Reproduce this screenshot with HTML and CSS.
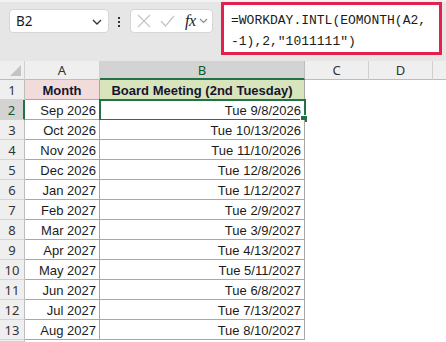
FILE: index.html
```html
<!DOCTYPE html>
<html>
<head>
<meta charset="utf-8">
<link rel="stylesheet" href="styles.css">
</head>
<body>
<div class="app">
  <div class="toolbar">
    <div class="namebox">
      <span class="ref">B2</span>
      <svg class="chev" width="10" height="6" viewBox="0 0 10 6"><path d="M1 1 L5 5 L9 1" fill="none" stroke="#333" stroke-width="1.3"/></svg>
    </div>
    <div class="dots"><i></i><i></i><i></i></div>
    <div class="fxbox">
      <svg class="ic" width="14" height="14" viewBox="0 0 14 14"><path d="M1 1 L13 13 M13 1 L1 13" stroke="#c4c4c4" stroke-width="1.2" fill="none"/></svg>
      <svg class="ic" width="15" height="12" viewBox="0 0 15 12"><path d="M1 6 L5.5 11 L14 1" stroke="#c4c4c4" stroke-width="1.2" fill="none"/></svg>
      <span class="fx">fx</span>
      <svg class="chev2" width="9" height="6" viewBox="0 0 9 6"><path d="M1 1 L4.5 4.5 L8 1" fill="none" stroke="#888" stroke-width="1.1"/></svg>
    </div>
    <div class="formula">=WORKDAY.INTL(EOMONTH(A2,<br>-1),2,"1011111")</div>
  </div>
  <div class="sheet">
    <div class="ch corner"><span class="tri"></span></div>
    <div class="ch">A</div>
    <div class="ch sel">B</div>
    <div class="ch">C</div>
    <div class="ch">D</div>
    <div class="ch last"></div>

    <div class="rh">1</div>
    <div class="c t hdr pink">Month</div>
    <div class="c t hdr green">Board Meeting (2nd Tuesday)</div>
    <div class="c e"></div><div class="c e"></div><div class="c e"></div>

    <div class="rh sel">2</div>
    <div class="c t r">Sep 2026</div>
    <div class="c t r active">Tue 9/8/2026<span class="handle"></span></div>
    <div class="c e"></div><div class="c e"></div><div class="c e"></div>

    <div class="rh">3</div>
    <div class="c t r">Oct 2026</div>
    <div class="c t r">Tue 10/13/2026</div>
    <div class="c e"></div><div class="c e"></div><div class="c e"></div>

    <div class="rh">4</div>
    <div class="c t r">Nov 2026</div>
    <div class="c t r">Tue 11/10/2026</div>
    <div class="c e"></div><div class="c e"></div><div class="c e"></div>

    <div class="rh">5</div>
    <div class="c t r">Dec 2026</div>
    <div class="c t r">Tue 12/8/2026</div>
    <div class="c e"></div><div class="c e"></div><div class="c e"></div>

    <div class="rh">6</div>
    <div class="c t r">Jan 2027</div>
    <div class="c t r">Tue 1/12/2027</div>
    <div class="c e"></div><div class="c e"></div><div class="c e"></div>

    <div class="rh">7</div>
    <div class="c t r">Feb 2027</div>
    <div class="c t r">Tue 2/9/2027</div>
    <div class="c e"></div><div class="c e"></div><div class="c e"></div>

    <div class="rh">8</div>
    <div class="c t r">Mar 2027</div>
    <div class="c t r">Tue 3/9/2027</div>
    <div class="c e"></div><div class="c e"></div><div class="c e"></div>

    <div class="rh">9</div>
    <div class="c t r">Apr 2027</div>
    <div class="c t r">Tue 4/13/2027</div>
    <div class="c e"></div><div class="c e"></div><div class="c e"></div>

    <div class="rh">10</div>
    <div class="c t r">May 2027</div>
    <div class="c t r">Tue 5/11/2027</div>
    <div class="c e"></div><div class="c e"></div><div class="c e"></div>

    <div class="rh">11</div>
    <div class="c t r">Jun 2027</div>
    <div class="c t r">Tue 6/8/2027</div>
    <div class="c e"></div><div class="c e"></div><div class="c e"></div>

    <div class="rh">12</div>
    <div class="c t r">Jul 2027</div>
    <div class="c t r">Tue 7/13/2027</div>
    <div class="c e"></div><div class="c e"></div><div class="c e"></div>

    <div class="rh">13</div>
    <div class="c t r">Aug 2027</div>
    <div class="c t r">Tue 8/10/2027</div>
    <div class="c e"></div><div class="c e"></div><div class="c e"></div>

    <div class="rh"></div>
    <div class="c e"></div><div class="c e"></div><div class="c e"></div><div class="c e"></div><div class="c e"></div>
  </div>
</div>
</body>
</html>
```
FILE: styles.css
```css
* { box-sizing: border-box; }
html, body { margin: 0; padding: 0; background: #fff; }
body { width: 446px; height: 342px; overflow: hidden; font-family: "Liberation Sans", Arial, sans-serif; }

.app { width: 446px; }

.toolbar {
  height: 61px;
  background: #e6e6e6;
  border-top: 2px solid #f2f2f2;
  display: flex;
  align-items: flex-start;
}

.namebox {
  margin-left: 9px;
  margin-top: 7px;
  width: 100px;
  height: 24px;
  background: #fff;
  border: 1px solid #d6d6d6;
  border-radius: 4px;
  display: flex;
  align-items: center;
  justify-content: space-between;
  padding: 0 6px 0 6px;
}
.ref { font-size: 13.5px; color: #1b1b1b; font-family: "Noto Sans", "Liberation Sans", sans-serif; }
.chev { margin-top: 1px; }

.dots {
  margin-left: 9px;
  margin-top: 15px;
  width: 3px;
  display: flex;
  flex-direction: column;
  gap: 2px;
}
.dots i { display: block; width: 2px; height: 2px; background: #333; }

.fxbox {
  margin-left: 9px;
  margin-top: 7px;
  width: 83px;
  height: 24px;
  background: #fff;
  border: 1px solid #d6d6d6;
  border-radius: 4px;
  display: flex;
  align-items: center;
  padding-left: 6px;
  gap: 9px;
}
.fx {
  font-family: "Liberation Serif", "Times New Roman", serif;
  font-style: italic;
  font-size: 16px;
  color: #222;
  margin-left: 1px;
  letter-spacing: -0.5px;
}
.chev2 { margin-left: -6px; }

.formula {
  margin-left: 8px;
  width: 221px;
  height: 53px;
  background: #fff;
  border: 3px solid #e3204e;
  padding: 5px 0 0 7px;
  font-family: "Liberation Mono", "DejaVu Sans Mono", monospace;
  font-size: 13px;
  line-height: 21px;
  color: #1b1b1b;
  white-space: nowrap;
}

.sheet {
  display: grid;
  grid-template-columns: 25px 75px 205px 64px 64px 13px;
  grid-template-rows: 19px repeat(13, 20px) 2px;
  font-size: 13px;
  color: #1b1b1b;
}

.ch {
  background: #efefef;
  border-right: 1px solid #cfcfcf;
  border-bottom: 1px solid #bdbdbd;
  display: flex;
  align-items: center;
  justify-content: center;
  font-size: 13px;
  color: #333;
  font-family: "Noto Sans", "Liberation Sans", sans-serif;
}
.ch.sel {
  background: #d3d3d3;
  color: #0f5b2f;
  border-bottom: 2px solid #217346;
  border-right-color: #bdbdbd;
}
.ch.last { border-right: none; }
.corner { position: relative; }
.tri {
  position: absolute;
  right: 3px;
  bottom: 3px;
  width: 0; height: 0;
  border-left: 11px solid transparent;
  border-bottom: 11px solid #c4c4c4;
}

.rh {
  background: #efefef;
  border-right: 1px solid #bdbdbd;
  border-bottom: 1px solid #d4d4d4;
  display: flex;
  align-items: center;
  justify-content: center;
  font-size: 13px;
  color: #333;
  font-family: "Noto Sans", "Liberation Sans", sans-serif;
}
.rh.sel {
  background: #d3d3d3;
  color: #0f5b2f;
  border-right: 2px solid #217346;
}

.c { background: #fff; }
.c.t {
  border-right: 1px solid #a8a8a8;
  border-bottom: 1px solid #a8a8a8;
  display: flex;
  align-items: center;
  padding: 1px 3px 0 3px;
  white-space: nowrap;
  position: relative;
}
.c.r { justify-content: flex-end; }
.c.hdr { justify-content: center; font-weight: bold; color: #15152e; }
.pink { background: #f2dcdb; }
.green { background: #d8e4bc; }

.active { outline: 2px solid #217346; outline-offset: -1px; }
.handle {
  position: absolute;
  right: -4px;
  bottom: -4px;
  width: 6px;
  height: 6px;
  background: #217346;
  border: 1px solid #fff;
  box-sizing: content-box;
}
```
